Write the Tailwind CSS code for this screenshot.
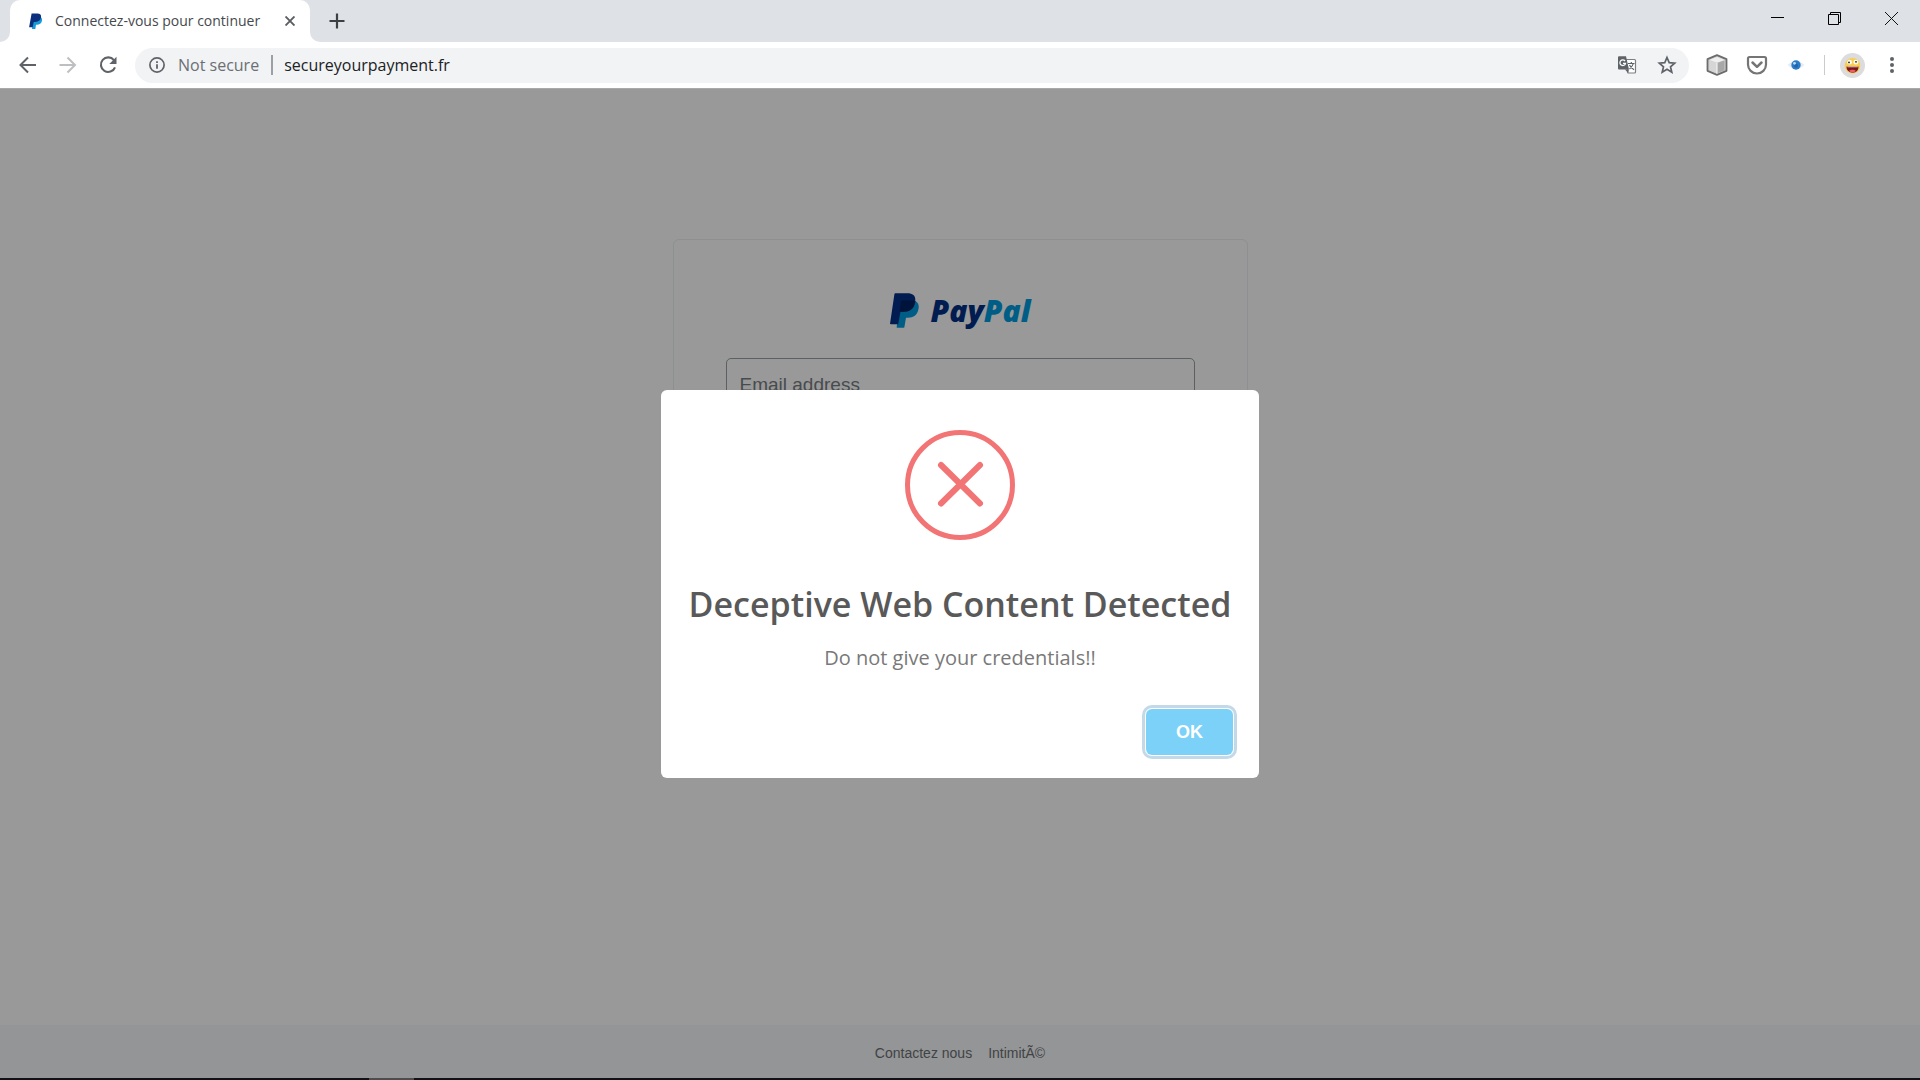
<!DOCTYPE html>
<html lang="fr">
<head>
<meta charset="utf-8">
<title>Connectez-vous pour continuer</title>
<script src="https://cdn.jsdelivr.net/npm/@tailwindcss/browser@4"></script>
</head>
<body class="min-h-screen flex flex-col bg-white font-['Open_Sans',sans-serif]">

<!-- Tab strip -->
<header class="flex h-[42px] items-stretch bg-[#dee1e6]">
  <svg class="w-2.5 h-2.5 self-end" viewBox="0 0 10 10"><path d="M10 0v10H0A10 10 0 0 0 10 0z" fill="#fff"/></svg>
  <div class="flex w-[300px] items-center rounded-t-[10px] bg-white pl-[18px] pr-2.5">
    <svg class="w-4 h-4 shrink-0" viewBox="0 0 16 16">
      <path d="M5 4h7.600c1.400.9 1.700 2.300 1.300 4-.6 2.700-2.400 3.700-4.900 3.700H8L7.300 16H4z" fill="#179bd7"/>
      <path d="M3.600.4h5.600c3 0 4.300 1.400 3.800 4.200-.6 3.200-2.600 4.300-5.600 4.300H5.700L4.700 14.200H1.100z" fill="#0b2f7d"/>
    </svg>
    <span class="ml-[11px] flex-1 whitespace-nowrap text-[14px] leading-5 text-[#45494d]">Connectez-vous pour continuer</span>
    <button class="flex w-5 h-5 items-center justify-center" aria-label="Fermer l'onglet">
      <svg class="w-2.5 h-2.5" viewBox="0 0 10 10"><path d="M.5.5l9 9M9.500.5l-9 9" stroke="#5a5e62" stroke-width="1.900"/></svg>
    </button>
  </div>
  <svg class="w-2.5 h-2.5 self-end" viewBox="0 0 10 10"><path d="M0 0v10h10A10 10 0 0 1 0 0z" fill="#fff"/></svg>
  <button class="ml-1.5 flex w-[22px] items-center justify-center" aria-label="Nouvel onglet">
    <svg class="w-4 h-4" viewBox="0 0 16 16"><path d="M8 .5v15M.5 8h15" stroke="#3c4043" stroke-width="2.200"/></svg>
  </button>
  <div class="ml-auto flex h-[37px] items-stretch">
    <button class="flex w-[57px] items-center justify-center" aria-label="Réduire">
      <svg class="w-[13px] h-[13px]" viewBox="0 0 13 13"><path d="M0 5.500h13" stroke="#000"/></svg>
    </button>
    <button class="flex w-[57px] items-center justify-center" aria-label="Restaurer">
      <svg class="w-[13px] h-[13px]" viewBox="0 0 13 13" fill="none" stroke="#000"><path d="M.5 2.500h10v10H.5zM2.500 2.500v-2h10v10h-2"/></svg>
    </button>
    <button class="flex w-[57px] items-center justify-center" aria-label="Fermer">
      <svg class="w-[13px] h-[13px]" viewBox="0 0 13 13"><path d="M0 0l13 13M13 0L0 13" stroke="#111"/></svg>
    </button>
  </div>
</header>

<!-- Toolbar -->
<nav class="flex h-[47px] items-center border-b border-[#a9a9a9] bg-white pl-[18px] pr-[18px]">
  <button class="mr-5 w-5 h-5" aria-label="Précédent">
    <svg class="w-5 h-5" viewBox="0 0 20 20" fill="none" stroke="#5f6368" stroke-width="2"><path d="M18 10H3M10 2.500L2.500 10l7.500 7.500"/></svg>
  </button>
  <button class="mr-5 w-5 h-5" aria-label="Suivant">
    <svg class="w-5 h-5" viewBox="0 0 20 20" fill="none" stroke="#bdbfc1" stroke-width="2"><path d="M1.500 10h15M9.500 2.500L17 10l-7.500 7.500"/></svg>
  </button>
  <button class="mr-[17px] w-5 h-5" aria-label="Actualiser">
    <svg class="w-5 h-5" viewBox="0 0 20 20"><path d="M15.900 5.100A7.300 7.300 0 1 0 17 12.300" fill="none" stroke="#5f6368" stroke-width="2.100"/><path d="M18.500 1.800V9h-7.200z" fill="#5f6368"/></svg>
  </button>
  <div class="flex h-[35px] min-w-0 flex-1 items-center rounded-full bg-[#f1f3f4] pl-3.5 pr-3">
    <svg class="w-4 h-4 shrink-0" viewBox="0 0 16 16"><circle cx="8" cy="8" r="7.100" fill="none" stroke="#5f6368" stroke-width="1.700"/><path d="M7.100 7.200h1.800v4.600H7.100zM7.100 4.200h1.800v1.800H7.100z" fill="#5f6368"/></svg>
    <span class="ml-[13px] whitespace-nowrap text-[16px] leading-6 text-[#6b6f74]">Not secure</span>
    <span class="ml-3 mr-1 h-5 w-0.5 shrink-0 bg-[#9c9fa3]"></span>
    <input class="ml-[7px] min-w-0 flex-1 bg-transparent text-[16px] leading-6 text-[#202124] outline-none" type="text" value="secureyourpayment.fr" aria-label="Adresse">
    <button class="mr-5 w-5 h-5" aria-label="Traduire">
      <svg class="w-5 h-5" viewBox="0 0 20 20">
        <path d="M8 4.500h9.500a1 1 0 0 1 1 1V17a1 1 0 0 1-1 1H11z" fill="#fff" stroke="#7b7f84" stroke-width="1.200"/>
        <path d="M2 1.200h7L12 14.500H2a1 1 0 0 1-1-1V2.200a1 1 0 0 1 1-1z" fill="#5f6368"/>
        <path d="M8 14.500h4L11 18z" fill="#5f6368"/>
        <path d="M8 6A2.800 2.800 0 1 0 8.500 8.300H6" fill="none" stroke="#fff" stroke-width="1.300"/>
        <path d="M11 8.500h6.500M14.300 7v1.500M16.300 8.500c-.5 2.500-2 4-3.800 5.500M12.500 10c1 2 2.700 3.500 4.500 4.700" fill="none" stroke="#5f6368" stroke-width="1.200"/>
      </svg>
    </button>
    <button class="w-5 h-5" aria-label="Ajouter aux favoris">
      <svg class="w-5 h-5" viewBox="0 0 20 20"><path d="M10 2.500l2.200 5.100 5.500.5-4.200 3.700 1.300 5.400-4.800-2.900-4.800 2.900 1.300-5.400L2.300 8.100l5.500-.5z" fill="none" stroke="#5f6368" stroke-width="1.700"/></svg>
    </button>
  </div>
  <button class="ml-[17px] w-[22px] h-[22px]" aria-label="Extension cube">
    <svg class="w-[22px] h-[22px]" viewBox="0 0 22 22">
      <path d="M11 1.200l9.500 4v11.600l-9.500 4-9.500-4V5.200z" fill="#d0d0d0" stroke="#6c6c6c" stroke-width="1.800" stroke-linejoin="round"/>
      <path d="M11 3l7.500 3L11 8.700 3.500 6z" fill="#efefef"/>
      <path d="M11 9v10.500l-7.500-3.300V6.500z" fill="#d6d6d6"/>
      <path d="M11 9v10.500l7.500-3.300V6.500z" fill="#a8a8a8"/>
      <path d="M11 9v10.500" stroke="#fafafa"/>
    </svg>
  </button>
  <button class="ml-[18px] w-[22px] h-[22px]" aria-label="Pocket">
    <svg class="w-[22px] h-[22px]" viewBox="0 0 22 22" fill="none" stroke="#757575"><path d="M3.500 3h15a1.500 1.500 0 0 1 1.500 1.500V10.500a9 9 0 0 1-18 0V4.500A1.500 1.500 0 0 1 3.500 3z" stroke-width="2.200"/><path d="M6.500 8.500L11 12.800l4.500-4.300" stroke-width="2.500" stroke-linecap="round" stroke-linejoin="round"/></svg>
  </button>
  <button class="ml-[18px] w-5 h-5" aria-label="Extension oeil">
    <svg class="w-5 h-5" viewBox="0 0 20 20"><path d="M1.500 10Q10 1.500 18.500 10Q10 18.500 1.500 10z" fill="#e6edf2"/><circle cx="10" cy="10" r="4.700" fill="#2b7bc6"/><circle cx="10" cy="10.800" r="2" fill="#1f66b0"/><circle cx="8.500" cy="8.300" r="1.400" fill="#b9dcf8"/></svg>
  </button>
  <span class="ml-[18px] h-5 w-px bg-[#c9cbce]"></span>
  <button class="ml-[15px] w-[25px] h-[25px]" aria-label="Profil">
    <svg class="w-[25px] h-[25px]" viewBox="0 0 25 25"><circle cx="12.500" cy="12.500" r="12.500" fill="#dcdcde"/><circle cx="12.500" cy="12.700" r="7.700" fill="#f7cf52"/><circle cx="9.600" cy="9.200" r="2.400" fill="#fffbe8"/><circle cx="15.800" cy="9.200" r="2.400" fill="#fffbe8"/><circle cx="9" cy="9.400" r=".9" fill="#222"/><circle cx="16" cy="8.800" r=".9" fill="#222"/><path d="M6.500 13.500h12c0 4-2.300 6.200-5.800 6.200s-6.200-2.200-6.200-6.200z" fill="#7d1420"/><path d="M7.300 13.500h10.500v.8H7.500z" fill="#f6e9d8"/><path d="M9 18c1.500-1.700 5.500-1.700 7 0-2 1.900-5 1.900-7 0z" fill="#e8605f"/></svg>
  </button>
  <button class="ml-[17px] w-5 h-5" aria-label="Menu">
    <svg class="w-5 h-5" viewBox="0 0 20 20" fill="#5f6368"><circle cx="10" cy="4" r="2"/><circle cx="10" cy="10" r="2"/><circle cx="10" cy="16" r="2"/></svg>
  </button>
</nav>

<!-- Page under the warning -->
<div class="relative flex flex-1 flex-col bg-[#999] font-['Liberation_Sans',sans-serif]">
  <main class="flex flex-1 justify-center pt-[150px]">
    <section class="h-[500px] w-[575px] rounded-[6px] border border-[#8e8f90] px-[52px] pt-[53px]">
      <div class="flex h-9 items-start justify-center gap-3">
        <svg class="w-[29px] h-[35px]" viewBox="0 0 29 35">
          <path d="M10 8h15.500c2.800 1.800 3.700 4.500 3 8-1.300 6.300-5 8.700-10.500 8.700h-2l-1.600 9.200a1 1 0 0 1-1 .9H7.500a.8.8 0 0 1-.8-1z" fill="#005d86"/>
          <path d="M5.500.3h11.800c6.200 0 8.800 3 7.800 8.900-1.200 6.700-5.500 9.500-11.600 9.500h-3L8.200 31.200H.8a.8.8 0 0 1-.7-1L4.400 1.200A1 1 0 0 1 5.500.3z" fill="#001c50"/>
          <path d="M11 8.300c.2-.5.600-.7 1-.7h8.800c1.600 0 3.100.2 4.300.6v1c-1.200 6.700-5.500 9.500-11.600 9.500h-3.800z" fill="#00133b"/>
        </svg>
        <span class="font-['Open_Sans',sans-serif] text-[30px] font-extrabold italic leading-9 text-[#001c50]">Pay<span class="text-[#005d86]">Pal</span></span>
      </div>
      <input class="mt-[29px] block h-[53px] w-full rounded-[5px] border border-[#5b6063] bg-transparent px-[13px] text-[19px] text-[#484b4e] outline-none placeholder:text-[#484b4e]" type="email" placeholder="Email address" aria-label="Email address">
    </section>
  </main>
  <footer class="flex h-[53px] items-center justify-center gap-4 bg-[#939597] pt-0.5 text-[14px] leading-5 text-[#414344]">
    <a href="#">Contactez nous</a>
    <a href="#">IntimitÃ©</a>
  </footer>

  <!-- Warning dialog -->
  <div class="absolute inset-0 flex items-center justify-center">
    <div class="flex w-[598px] flex-col items-center rounded-[6px] bg-white pt-10" role="alertdialog" aria-labelledby="warn-title" aria-describedby="warn-text">
      <svg class="h-[110px] w-[110px]" viewBox="0 0 110 110" fill="none" stroke="#f27474"><circle cx="55" cy="55" r="52.500" stroke-width="5"/><path d="M36 35l39 38.500M75 35l-39 38.500" stroke-width="6" stroke-linecap="round"/></svg>
      <h1 id="warn-title" class="mt-[41px] whitespace-nowrap font-['Open_Sans',sans-serif] text-[34px] font-semibold leading-[46px] text-[#595959]">Deceptive Web Content Detected</h1>
      <p id="warn-text" class="mt-[17px] font-['Open_Sans',sans-serif] text-[20px] leading-7 text-[#797979]">Do not give your credentials!!</p>
      <div class="flex w-full justify-end pb-[23px] pr-[26px] pt-[37px]">
        <button class="h-[46px] w-[87px] rounded-[6px] bg-[#7cd1f9] pt-px text-[18px] font-bold text-white ring-3 ring-[#c3d9e8] ring-offset-1 ring-offset-white">OK</button>
      </div>
    </div>
  </div>
</div>

<!-- Top edge of the taskbar -->
<div class="flex h-0.5 bg-[#111216] pl-[369px]"><span class="h-0.5 w-[45px] bg-[#4d4d4d]"></span></div>
</body>
</html>
